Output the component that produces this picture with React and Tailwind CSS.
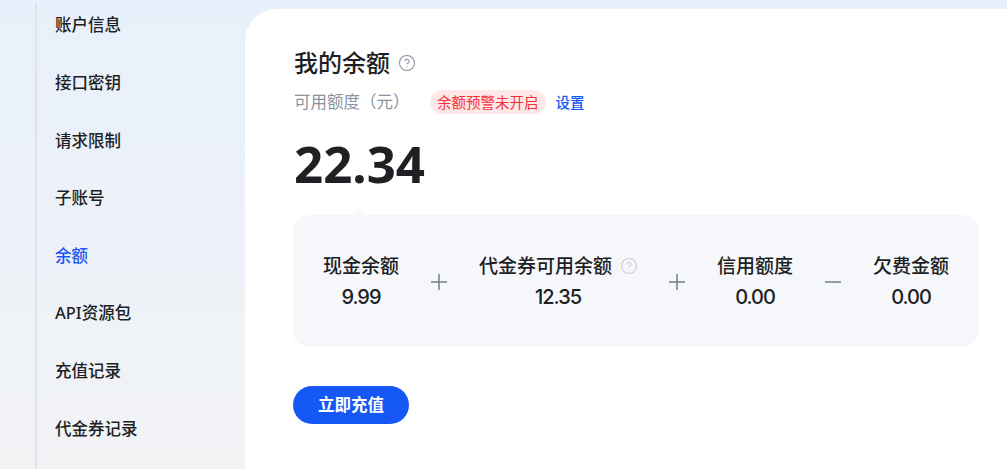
import { CircleHelp } from "lucide-react";

const menu = ["账户信息", "接口密钥", "请求限制", "子账号", "余额", "API资源包", "充值记录", "代金券记录"];

const parts = [
  { label: "现金余额", value: "9.99" },
  { op: "plus" },
  { label: "代金券可用余额", value: "12.35", help: true },
  { op: "plus" },
  { label: "信用额度", value: "0.00" },
  { op: "minus" },
  { label: "欠费金额", value: "0.00" },
];

function OpIcon({ type }) {
  return (
    <svg width="16" height="16" viewBox="0 0 16 16" className="shrink-0 text-[#6b7585]" fill="none" stroke="currentColor" strokeWidth="1.4">
      <path d="M0 8h16" />
      {type === "plus" && <path d="M8 0v16" />}
    </svg>
  );
}

export default function App() {
  return (
    <div
      className="flex h-[469px] w-[1007px] overflow-hidden bg-gradient-to-b from-[#e8f0fb] to-[#f2f3f5] text-[#1d1f24]"
      style={{ fontFamily: '"Noto Sans", "Noto Sans CJK SC", sans-serif' }}
    >
      <div className="mt-[2px] w-[37px] shrink-0 border-r-2 border-[#dfe4ec]" />
      <nav className="flex w-[208px] shrink-0 flex-col pl-[18px] pt-[10.4px]">
        {menu.map((item) => (
          <div
            key={item}
            className={`flex h-[57.6px] shrink-0 items-start text-[16.5px] font-medium leading-[30px] ${item === "余额" ? "text-[#1658f5]" : ""}`}
          >
            {item}
          </div>
        ))}
      </nav>
      <main className="mt-[9px] flex-1 rounded-tl-[32px] bg-white pl-[48px] pt-[36px]">
        <div className="flex items-center gap-[8px] pl-px">
          <h1 className="text-[24px] font-medium leading-[36px]">我的余额</h1>
          <CircleHelp size={18} strokeWidth={1.4} className="text-[#8a8f99]" />
        </div>
        <div className="mt-[9px] flex items-center pl-px">
          <span className="w-[136px] text-[16.5px] leading-[24px] text-[#8d939e]">可用额度（元）</span>
          <span className="rounded-full bg-[#ffe9e8] px-[7px] text-[14.5px] leading-[24px] text-[#f5323c]">余额预警未开启</span>
          <a className="ml-[10px] text-[14.5px] font-medium leading-[24px] text-[#1658f5]">设置</a>
        </div>
        <div className="mt-[19px] pl-px text-[51px] font-bold leading-[60px] text-[#1f2023]">22.34</div>
        <div className="relative mt-[22px] flex h-[132px] w-[686px] items-center gap-8 rounded-[16px] bg-[#f5f7fa] pb-px pl-[30px] pt-[3px]">
          <div className="absolute -top-[5px] left-[60px] h-[10px] w-[10px] rotate-45 rounded-[2px] bg-[#f5f7fa]" />
          {parts.map((p, i) =>
            p.op ? (
              <OpIcon key={i} type={p.op} />
            ) : (
              <div key={i} className="flex shrink-0 flex-col items-center">
                <div className="flex items-center gap-[8px] text-[19px] font-medium leading-[28px]">
                  {p.label}
                  {p.help && <CircleHelp size={18} strokeWidth={1.4} className="-mr-px text-[#c9cdd4]" />}
                </div>
                <div className="mt-[2px] font-['Inter'] text-[20px] font-medium leading-[30px] tracking-[-1px]">{p.value}</div>
              </div>
            )
          )}
        </div>
        <button className="mt-[39px] h-[38px] w-[116px] rounded-full bg-[#1658f5] text-[16.5px] font-semibold text-white">
          立即充值
        </button>
      </main>
    </div>
  );
}
